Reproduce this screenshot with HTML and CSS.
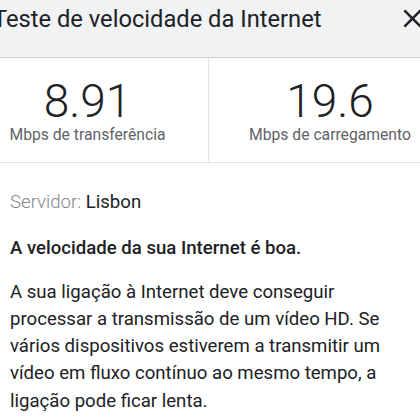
FILE: index.html
```html
<!DOCTYPE html>
<html lang="pt">
<head>
    <meta charset="UTF-8">
    <meta name="viewport" content="width=device-width, initial-scale=1.0">
    <title>Teste de velocidade da Internet</title>
    <link rel="stylesheet" href="styles.css">
</head>
<body>
    <div class="page">
        <!-- Cabeçalho do cartão -->
        <div class="header">
            <h1 class="title">Teste de velocidade da Internet</h1>
            <svg class="close" viewBox="0 0 24 24" width="31" height="31" aria-label="Fechar">
                <path d="M19 6.41L17.59 5 12 10.59 6.41 5 5 6.41 10.59 12 5 17.59 6.41 19 12 13.41 17.59 19 19 17.59 13.41 12z"/>
            </svg>
        </div>

        <!-- Resultados -->
        <div class="stats">
            <div class="stat">
                <div class="stat-value">8.91</div>
                <div class="stat-label">Mbps de transferência</div>
            </div>
            <div class="stat">
                <div class="stat-value">19.6</div>
                <div class="stat-label">Mbps de carregamento</div>
            </div>
        </div>

        <div class="content">
            <p class="server"><span class="server-key">Servidor:</span> Lisbon</p>
            <p class="verdict">A velocidade da sua Internet é boa.</p>
            <p class="desc">A sua ligação à Internet deve conseguir processar a transmissão de um vídeo HD. Se vários dispositivos estiverem a transmitir um vídeo em fluxo contínuo ao mesmo tempo, a ligação pode ficar lenta.</p>
        </div>
    </div>
</body>
</html>
```

FILE: styles.css
```css
/* Estilos generales */
html, body {
    margin: 0;
    padding: 0;
    background: #fff;
    overflow: hidden;
}

body {
    font-family: Roboto, "Noto Sans", Arial, sans-serif;
    color: #202124;
}

/* la captura está recortada: la tarjeta empieza fuera de la pantalla */
.page {
    width: 484px;
    margin-left: -33px;
}

/* --- CABECERA --- */
.header {
    display: flex;
    justify-content: space-between;
    align-items: flex-start;
    height: 57px;
    padding: 0 23px 0 26px;
    background-color: #f1f2f4;
    border-bottom: 1px solid #cfd0d2;
}

.title {
    margin: 5px 0 0;
    font-size: 23.7px;
    font-weight: 400;
    line-height: 28px;
}

.close {
    margin-top: 3px;
    fill: #202124;
}

/* --- RESULTADOS --- */
.stats {
    display: grid;
    grid-template-columns: 242px 242px;
    border-bottom: 1px solid #e3e3e3;
}

.stat {
    height: 104px;
    padding-top: 18px;
    box-sizing: border-box;
    text-align: center;
}

.stat:first-child {
    border-right: 1px solid #e3e3e3;
}

.stat-value {
    font-size: 46px;
    font-weight: 300;
    line-height: 50px;
    color: #202124;
}

.stat-label {
    font-size: 15.7px;
    line-height: 18px;
    color: #5f6368;
}

/* --- TEXTO --- */
.content {
    padding: 26px 43px 0;
    font-size: 18.6px;
    line-height: 27.3px;
}

.content p {
    margin: 0;
}

.server-key {
    color: #80868b;
    font-weight: 300;
}

.verdict {
    margin-top: 19px !important;
    font-weight: 500;
}

.desc {
    margin-top: 16px !important;
}
```
